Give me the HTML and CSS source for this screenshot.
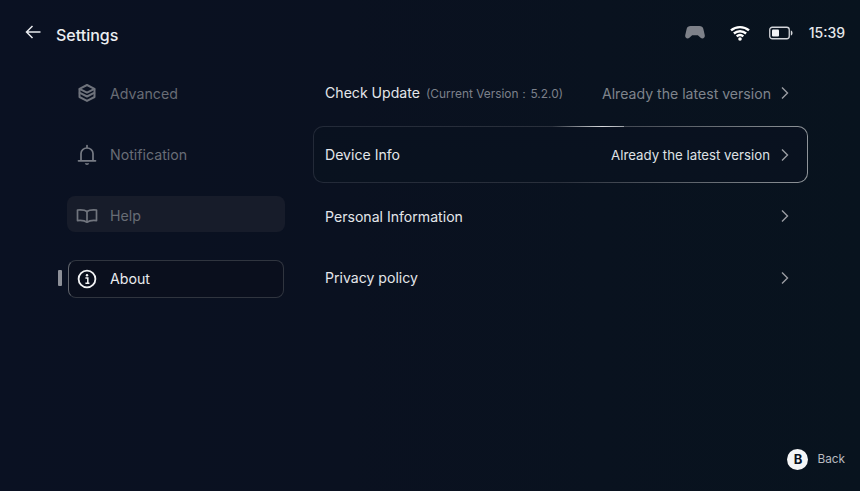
FILE: index.html
```html
<!DOCTYPE html>
<html lang="en">
<head>
<meta charset="utf-8">
<title>Settings</title>
<link rel="stylesheet" href="styles.css">
</head>
<body>
<div class="page">
  <header class="top">
    <div class="title-group">
      <svg class="back-arrow" width="18" height="16" viewBox="0 0 18 16"><path d="M16.500 8H2.500M8.500 2L2.500 8l6 6" fill="none" stroke="#e8eaee" stroke-width="1.500"/></svg>
      <span class="title">Settings</span>
    </div>
    <div class="status">
      <svg class="st-pad" width="22" height="15" viewBox="0 0 22 15"><path d="M6.500 1h9c2 0 3.300 1 3.800 2.800l1.500 6.500c.5 2.600-2.300 4.200-4.200 2.500l-2.200-2.100c-.4-.4-.8-.5-1.300-.5H8.900c-.5 0-.9.100-1.300.5l-2.200 2.100c-1.900 1.700-4.700.1-4.200-2.500l1.500-6.500C3.200 2 4.500 1 6.500 1z" fill="#7e8189"/></svg>
      <svg class="st-wifi" width="20" height="16" viewBox="0 0 20 16"><path d="M1 5.400c5-4.400 13-4.400 18 0M3.900 8.500c3.400-3 8.800-3 12.200 0M6.700 11.400c1.900-1.600 4.700-1.600 6.600 0" fill="none" stroke="#fff" stroke-width="2.400"/><circle cx="10" cy="14" r="1.800" fill="#fff"/></svg>
      <svg class="st-batt" width="24" height="14" viewBox="0 0 24 14"><rect x=".75" y="1.250" width="19.500" height="11.500" rx="2.500" fill="none" stroke="#d4d6da" stroke-width="1.300"/><rect x="3" y="3.500" width="7" height="7" rx="1" fill="#f2f3f5"/><path d="M21.800 4.500v5c1-.2 1.700-1.200 1.700-2.500s-.7-2.300-1.700-2.500z" fill="#d4d6da"/></svg>
      <span class="clock">15:39</span>
    </div>
  </header>

  <main class="body">
    <nav class="side">
      <div class="side-item">
        <svg class="side-icon" width="20" height="20" viewBox="0 0 20 20"><g fill="none" stroke="#6f737c" stroke-width="2" stroke-linejoin="round"><path d="M10 2l7.500 3.800L10 9.600 2.500 5.800z"/><path d="M2.500 5.800v3.900l7.500 3.800 7.500-3.800V5.800"/><path d="M2.500 9.700v4.300l7.500 3.900 7.500-3.900V9.700"/></g></svg>
        <span>Advanced</span>
      </div>
      <div class="side-item">
        <svg class="side-icon" width="20" height="22" viewBox="0 0 20 22"><g fill="none" stroke="#787c85" stroke-width="1.700" stroke-linecap="round"><path d="M10 1.500v2.500M4 16V9.500C4 6.300 6.700 4 10 4s6 2.300 6 5.500V16M1.500 16.800h17"/></g><path d="M7.800 19.300h4.400c-.3 1-1.100 1.700-2.200 1.700s-1.900-.7-2.200-1.700z" fill="#787c85"/></svg>
        <span>Notification</span>
      </div>
      <div class="side-item side-hover">
        <svg class="side-icon" width="22" height="16" viewBox="0 0 22 16"><g fill="none" stroke="#71757e" stroke-width="1.700" stroke-linejoin="round"><path d="M11 3.500C9.200 2 6 1.600 1.500 2v10.600c4.200-.4 7.300 0 9.500 1.600 2.200-1.600 5.300-2 9.500-1.600V2C16 1.600 12.800 2 11 3.500z"/><path d="M11 3.500v10.700"/></g></svg>
        <span>Help</span>
      </div>
      <div class="side-item side-active">
        <i class="active-mark"></i>
        <svg class="side-icon" width="20" height="20" viewBox="0 0 20 20"><circle cx="10" cy="10" r="8.400" fill="none" stroke="#f2f3f5" stroke-width="1.800"/><circle cx="10" cy="6.200" r="1.200" fill="#f2f3f5"/><path d="M8.400 9h2.400v5.200M8.400 14.300h4" fill="none" stroke="#f2f3f5" stroke-width="1.500"/></svg>
        <span>About</span>
      </div>
    </nav>

    <section class="list">
      <div class="row">
        <div class="row-left"><span class="row-name">Check Update</span><span class="row-note">(Current Version：5.2.0)</span></div>
        <div class="row-right"><span class="row-val dim">Already the latest version</span>
          <svg class="chev" width="10" height="14" viewBox="0 0 10 14"><path d="M2 1.500L7.500 7 2 12.500" fill="none" stroke="#9a9da3" stroke-width="1.400"/></svg></div>
      </div>
      <div class="row row-focus">
        <div class="row-left"><span class="row-name">Device Info</span></div>
        <div class="row-right row-right-focus"><span class="row-val">Already the latest version</span>
          <svg class="chev" width="10" height="14" viewBox="0 0 10 14"><path d="M2 1.500L7.500 7 2 12.500" fill="none" stroke="#9a9da3" stroke-width="1.400"/></svg></div>
      </div>
      <div class="row">
        <div class="row-left"><span class="row-name">Personal Information</span></div>
        <div class="row-right"><svg class="chev" width="10" height="14" viewBox="0 0 10 14"><path d="M2 1.500L7.500 7 2 12.500" fill="none" stroke="#9a9da3" stroke-width="1.400"/></svg></div>
      </div>
      <div class="row">
        <div class="row-left"><span class="row-name">Privacy policy</span></div>
        <div class="row-right"><svg class="chev" width="10" height="14" viewBox="0 0 10 14"><path d="M2 1.500L7.500 7 2 12.500" fill="none" stroke="#9a9da3" stroke-width="1.400"/></svg></div>
      </div>
    </section>
  </main>

  <footer class="foot">
    <span class="b-btn">B</span>
    <span class="b-label">Back</span>
  </footer>
</div>
</body>
</html>
```
FILE: styles.css
```css
* { box-sizing: border-box; }
html, body { margin: 0; height: 100%; }
body {
  font-family: Inter, "Noto Sans", sans-serif;
  background: #080f1c;
  overflow: hidden;
}
.page {
  width: 860px;
  height: 491px;
  display: flex;
  flex-direction: column;
  background: linear-gradient(90deg, #0a1122 0%, #0a1120 40%, #08131e 100%);
  color: #e8eaee;
}
.top {
  height: 64.5px;
  flex: none;
  display: flex;
  align-items: center;
  justify-content: space-between;
  padding: 0 15px 0 24px;
}
.title-group { display: flex; align-items: center; gap: 14px; margin-top: 5px; }
.back-arrow { margin-top: -6px; }
.title { font-size: 16px; font-weight: 500; color: #eceef1; }
.status { display: flex; align-items: center; margin-top: 1px; }
.st-pad { margin-right: 24px; }
.st-wifi { margin-right: 19px; }
.st-batt { margin-right: 16px; }
.clock { font-size: 14px; font-weight: 500; color: #e6e8eb; }
.body {
  flex: 1;
  display: flex;
  min-height: 0;
  padding-left: 67px;
}
.side {
  width: 218px;
  flex: none;
  display: flex;
  flex-direction: column;
  gap: 24.6px;
  padding-top: 10px;
}
.side-item {
  height: 37px;
  display: flex;
  align-items: center;
  border-radius: 8px;
  color: #686c75;
  font-size: 14.2px;
  position: relative;
  padding-left: 43px;
}
.side-icon {
  position: absolute;
  left: 20px;
  top: 50%;
  transform: translate(-50%, -50%);
}
.side-hover {
  background: #171c2a;
  height: 36px;
  margin-top: -2px;
  margin-bottom: 3.5px;
  padding-top: 4px;
}
.side-hover .side-icon { top: 57%; }
.side-active {
  color: #e8eaee;
  border: 1px solid #30353f;
  border-left-color: #62666e;
  background: #0a0f1d;
  padding-left: 41px;
  margin-left: 1px;
  margin-right: 1px;
  height: 38px;
  border-radius: 8px;
}
.side-active .side-icon { left: 18px; }
.active-mark {
  position: absolute;
  left: -11px;
  top: 9px;
  width: 4px;
  height: 16px;
  border-radius: 1px;
  background: #8d9098;
}
.list {
  width: 495px;
  margin-left: 28px;
  display: flex;
  flex-direction: column;
  gap: 4.3px;
}
.row {
  height: 57.3px;
  display: flex;
  align-items: center;
  justify-content: space-between;
  padding: 0 17px 0 11px;
  border: 1px solid transparent;
  border-radius: 10px;
  position: relative;
}
.row-left { display: flex; align-items: baseline; gap: 6px; }
.row-name { font-size: 14.1px; color: #e4e6ea; }
.row-note { font-size: 11.9px; color: #7c808a; }
.row-right { display: flex; align-items: center; gap: 9px; }
.row-right-focus { gap: 10px; }
.row-val { font-size: 13.25px; color: #dfe1e5; }
.row-val.dim { color: #7f848c; font-size: 14.1px; }
.chev { display: block; }
.row-focus {
  background:
    linear-gradient(#09111f, #09121f) padding-box,
    linear-gradient(90deg, #232a38 0%, #2a303c 50%, #5a6068 75%, #8f9499 100%) border-box;
}
.row-focus::before {
  content: "";
  position: absolute;
  left: 238px;
  top: -1px;
  width: 72px;
  height: 1px;
  background: linear-gradient(90deg, transparent, #d8dade 70%, #9da2a8);
}
.foot {
  position: absolute;
  right: 15px;
  top: 448px;
  display: flex;
  align-items: center;
  gap: 9px;
  height: 22px;
}
.b-btn {
  width: 21px;
  height: 21px;
  border-radius: 50%;
  background: #f5f6f7;
  color: #0a1120;
  font-size: 13px;
  font-weight: 700;
  display: flex;
  align-items: center;
  justify-content: center;
}
.b-label { font-size: 11.8px; color: #b9bbc0; }
```
